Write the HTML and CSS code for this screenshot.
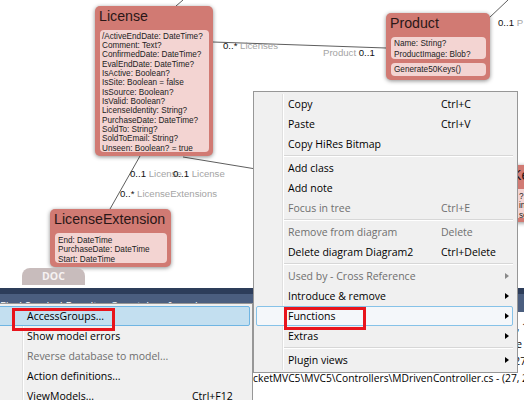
FILE: index.html
```html
<!DOCTYPE html>
<html>
<head>
<meta charset="utf-8">
<link rel="stylesheet" href="styles.css">
</head>
<body>
<div class="screen">
  <div class="canvas">
    <svg class="links" width="524" height="288" viewBox="0 0 524 288">
      <line x1="183" y1="0" x2="176" y2="6"/>
      <line x1="213" y1="42" x2="386" y2="48"/>
      <line x1="140" y1="156" x2="110" y2="209"/>
      <line x1="183" y1="157" x2="262" y2="170"/>
      <line x1="489" y1="18" x2="508" y2="0"/>
    </svg>

    <div class="cls cls-license">
      <div class="cls-title">License</div>
      <div class="cls-panel">
        <div>/ActiveEndDate: DateTime?</div>
        <div>Comment: Text?</div>
        <div>ConfirmedDate: DateTime?</div>
        <div>EvalEndDate: DateTime?</div>
        <div>IsActive: Boolean?</div>
        <div>IsSite: Boolean = false</div>
        <div>IsSource: Boolean?</div>
        <div>IsValid: Boolean?</div>
        <div>LicenseIdentity: String?</div>
        <div>PurchaseDate: DateTime?</div>
        <div>SoldTo: String?</div>
        <div>SoldToEmail: String?</div>
        <div>Unseen: Boolean? = true</div>
      </div>
    </div>

    <div class="cls cls-product">
      <div class="cls-title">Product</div>
      <div class="cls-panel wide">
        <div>Name: String?</div>
        <div>ProductImage: Blob?</div>
      </div>
      <div class="cls-panel wide">
        <div>Generate50Keys()</div>
      </div>
    </div>

    <div class="cls cls-ext">
      <div class="cls-title">LicenseExtension</div>
      <div class="cls-panel mid">
        <div>End: DateTime</div>
        <div>PurchaseDate: DateTime</div>
        <div>Start: DateTime</div>
      </div>
    </div>

    <div class="cls cls-key">
      <div class="cls-title">Key</div>
      <div class="cls-panel mid">
        <div>?</div>
        <div>in</div>
        <div>se</div>
      </div>
    </div>

    <div class="lbl l1"><b>0..*</b> Licenses</div>
    <div class="lbl l2">Product <b>0..1</b></div>
    <div class="lbl l3"><b>0..1</b> P</div>
    <div class="lbl l4"><b>0..1</b> License</div>
    <div class="lbl l5"><b>0..1</b> License</div>
    <div class="lbl l6"><b>0..*</b> LicenseExtensions</div>

    <div class="doc-tab">DOC</div>
  </div>

  <div class="toolwin">
    <div class="tw-edge"></div>
    <div class="tw-title">Find Symbol Results - 3 matches found</div>
    <div class="results">
      <div class="row">C:\Users\F\Documents\Visual Studio 2013\Projects\TicketMVC5\MVC5\Controllers\MDrivenController.cs - (12, 18) : using Eco.Services;</div>
      <div class="row">C:\Users\F\Documents\Visual Studio 2013\Projects\TicketMVC5\MVC5\Controllers\MDrivenController.cs - Line 14 : public</div>
      <div class="row">C:\Users\FM\Documents\Visual Studio 2013\Projects\TicketMVC5\MVC5\Controllers\MDrivenController.cs - (27, 5) : public</div>
      <div class="row">C:\Users\F\Documents\Visual Studio 2013\Projects\TicketMVC5\MVC5\Controllers\MDrivenController.cs - (27, 22) : public</div>
    </div>
  </div>

  <div class="menu main">
    <div class="mi"><span class="t">Copy</span><span class="k">Ctrl+C</span></div>
    <div class="mi"><span class="t">Paste</span><span class="k">Ctrl+V</span></div>
    <div class="mi"><span class="t">Copy HiRes Bitmap</span></div>
    <div class="sep"></div>
    <div class="mi"><span class="t">Add class</span></div>
    <div class="mi"><span class="t">Add note</span></div>
    <div class="mi off"><span class="t">Focus in tree</span><span class="k">Ctrl+E</span></div>
    <div class="sep"></div>
    <div class="mi off"><span class="t">Remove from diagram</span><span class="k">Delete</span></div>
    <div class="mi"><span class="t">Delete diagram Diagram2</span><span class="k">Ctrl+Delete</span></div>
    <div class="sep"></div>
    <div class="mi off"><span class="t">Used by - Cross Reference</span><span class="arr"></span></div>
    <div class="mi"><span class="t">Introduce &amp; remove</span><span class="arr"></span></div>
    <div class="mi hot"><span class="t">Functions</span><span class="arr"></span></div>
    <div class="mi"><span class="t">Extras</span><span class="arr"></span></div>
    <div class="sep"></div>
    <div class="mi"><span class="t">Plugin views</span><span class="arr"></span></div>
  </div>

  <div class="menu sub">
    <div class="mi hot"><span class="t">AccessGroups...</span></div>
    <div class="mi"><span class="t">Show model errors</span></div>
    <div class="mi off"><span class="t">Reverse database to model...</span></div>
    <div class="mi"><span class="t">Action definitions...</span></div>
    <div class="mi"><span class="t">ViewModels...</span><span class="k">Ctrl+F12</span></div>
  </div>

  <div class="mark m1"></div>
  <div class="mark m2"></div>
</div>
</body>
</html>
```

FILE: styles.css
```css
* { box-sizing: border-box; }

body { margin: 0; background: #fff; }

.screen {
  position: relative;
  width: 524px;
  height: 400px;
  overflow: hidden;
  background: #fff;
  font-family: "Liberation Sans", Arial, sans-serif;
}

/* ---------- diagram canvas ---------- */
.canvas {
  position: relative;
  height: 288px;
  background: #fff;
}

.links {
  position: absolute;
  left: 0;
  top: 0;
}
.links line { stroke: #5e5e5e; stroke-width: 1; }

.cls {
  position: absolute;
  display: flex;
  flex-direction: column;
  gap: 4px;
  padding: 0 4px 4px 5px;
  background: #d17a73;
  border-radius: 5px;
  box-shadow: 0 1px 4px rgba(0, 0, 0, 0.45);
}
.cls-title {
  height: 20px;
  margin-left: -1px;
  font-size: 14.2px;
  line-height: 21px;
  color: #2a1717;
  white-space: nowrap;
}
.cls-panel {
  background: #f3d4d2;
  border-radius: 4px;
  padding: 1.5px 2px;
  font-size: 8.2px;
  line-height: 9.36px;
  color: #222;
  white-space: nowrap;
  overflow: hidden;
}
.cls-panel.wide { line-height: 10.5px; padding: 2px 3px; }
.cls-panel.mid { line-height: 9.5px; padding: 2.5px 3px; }

.cls-license { left: 95px; top: 6px; width: 118px; height: 150px; }
.cls-license .cls-panel { flex: 1; }
.cls-product { left: 386px; top: 13px; width: 104px; height: 67px; }
.cls-ext { left: 50px; top: 209px; width: 121px; height: 58px; }
.cls-key { left: 508px; top: 165px; width: 70px; height: 57px; }
.cls-key .cls-panel { padding-left: 6px; }

.lbl {
  position: absolute;
  font-size: 9.6px;
  line-height: 11px;
  color: #a4a4a4;
  white-space: nowrap;
}
.lbl b { font-weight: normal; color: #111; }
.l1 { left: 223px; top: 39.5px; }
.l2 { left: 323px; top: 46.5px; }
.l3 { left: 498px; top: 17px; }
.l4 { left: 130px; top: 167.5px; }
.l5 { left: 173px; top: 167.5px; }
.l6 { left: 120px; top: 188px; }

.doc-tab {
  position: absolute;
  left: 22px;
  top: 268px;
  width: 63px;
  height: 17px;
  border-radius: 8px 8px 0 0;
  background: #c8bcbc;
  color: #f6f2f2;
  font-family: "Open Sans", sans-serif;
  font-weight: bold;
  font-size: 10.5px;
  line-height: 17px;
  text-align: center;
}

/* ---------- tool window ---------- */
.toolwin {
  height: 112px;
  display: flex;
  flex-direction: column;
  font-family: "Open Sans", sans-serif;
}
.tw-edge { height: 6px; background: #2d3d5a; }
.tw-title {
  height: 18px;
  padding: 2.5px 0 0 0;
  background: #4b5e7f;
  color: #fff;
  font-size: 11px;
  line-height: 18px;
  white-space: nowrap;
  overflow: hidden;
}
.results {
  flex: 1;
  padding: 7px 0 0 0;
  background: #fff;
  font-size: 10.25px;
  line-height: 17px;
  color: #000;
}
.row { white-space: nowrap; height: 17px; }

/* ---------- context menus ---------- */
.menu {
  position: absolute;
  background: #f0f0f0;
  border: 1px solid #979797;
  padding: 2px 4px 2px 2px;
  font-family: "Open Sans", sans-serif;
  font-size: 10.5px;
  color: #000;
}
.menu::before {
  content: "";
  position: absolute;
  top: 2px;
  bottom: 2px;
  left: 28px;
  width: 1px;
  background: #e0e0e0;
  box-shadow: 1px 0 0 #fff;
}
.main { left: 253px; top: 91px; width: 265px; }
.sub { left: -7px; top: 303px; width: 260px; height: 110px; padding-right: 2px; }

.mi {
  position: relative;
  display: grid;
  grid-template-columns: 31px 153px 1fr 14px;
  align-items: center;
  height: 20px;
  line-height: 18px;
  border: 1px solid transparent;
  border-radius: 2px;
  white-space: nowrap;
}
.sub .mi { grid-template-columns: 30px 165px 1fr; }
.mi .t { grid-column: 2; }
.mi .k { grid-column: 3; }
.mi .arr {
  grid-column: 4;
  justify-self: end;
  margin-right: 3px;
  width: 0;
  height: 0;
  border-left: 4px solid #000;
  border-top: 3.5px solid transparent;
  border-bottom: 3.5px solid transparent;
}
.mi.off { color: #6f6f6f; }
.mi.off .arr { border-left-color: #8a8a8a; }

.main .mi.hot { border-color: #86c2e8; background: #f4f7fa; }
.sub .mi.hot { border-color: #6fb5e3; background: #c3dff0; }

.sep {
  height: 2px;
  margin: 1px 0 1px 27px;
  border-top: 1px solid #d7d7d7;
  border-bottom: 1px solid #fff;
}

/* ---------- red annotation boxes ---------- */
.mark {
  position: absolute;
  border: 3px solid #e8141c;
}
.m1 { left: 12px; top: 308px; width: 103px; height: 23px; }
.m2 { left: 284px; top: 307px; width: 82px; height: 23px; }
```
